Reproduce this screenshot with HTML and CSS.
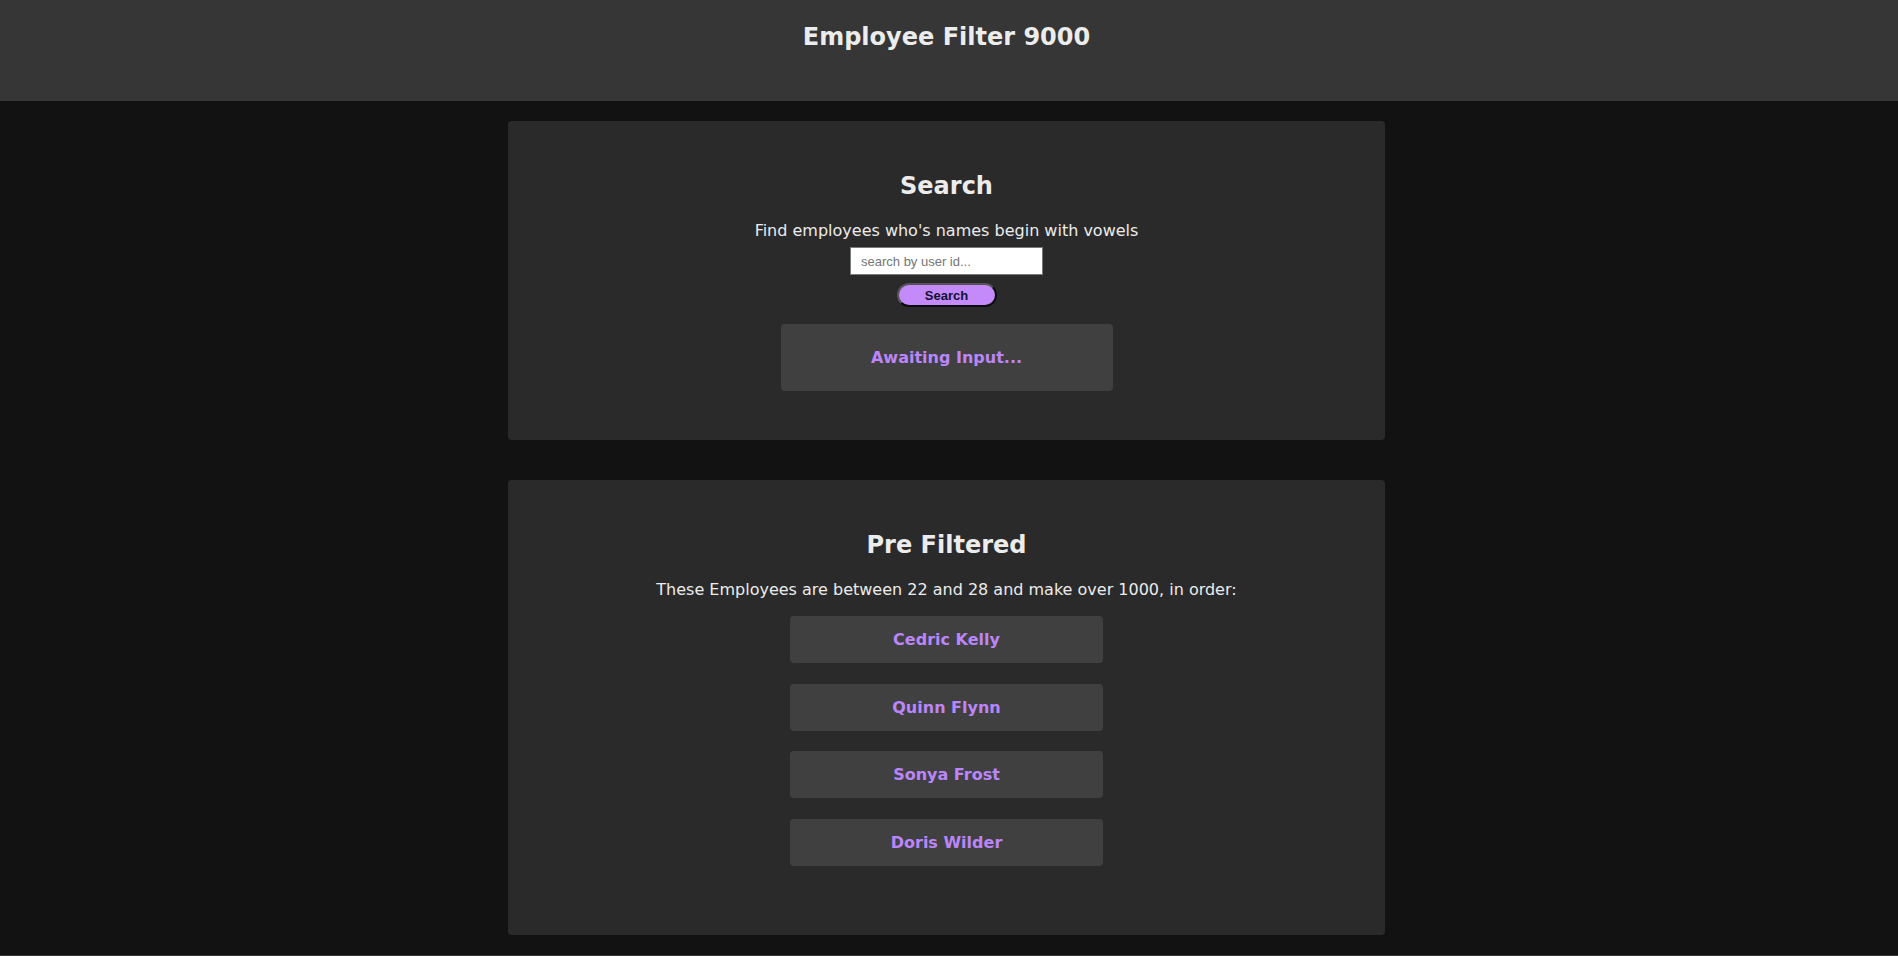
FILE: index.html
```html
<!DOCTYPE html>
<html lang="en">
<head>
<meta charset="utf-8">
<title>Employee Filter 9000</title>
<link rel="stylesheet" href="styles.css">
</head>
<body>
<header class="site-header">
  <h1 class="site-title">Employee Filter 9000</h1>
</header>
<main class="main">
  <section class="card">
    <h2 class="card-title">Search</h2>
    <p class="card-text">Find employees who's names begin with vowels</p>
    <input class="search-input" type="text" placeholder="search by user id...">
    <button class="search-button" type="button">Search</button>
    <div class="status-box">Awaiting Input...</div>
  </section>
  <section class="card">
    <h2 class="card-title">Pre Filtered</h2>
    <p class="card-text">These Employees are between 22 and 28 and make over 1000, in order:</p>
    <ul class="employee-list">
      <li class="employee">Cedric Kelly</li>
      <li class="employee">Quinn Flynn</li>
      <li class="employee">Sonya Frost</li>
      <li class="employee">Doris Wilder</li>
    </ul>
  </section>
</main>
<footer class="site-footer"></footer>
</body>
</html>
```
FILE: styles.css
```css
* { box-sizing: border-box; }
html, body {
  margin: 0;
  padding: 0;
  background: #121212;
  color: #ececec;
  font-family: "DejaVu Sans", Verdana, sans-serif;
}
.site-header {
  background: #363636;
  height: 101px;
  padding: 23px 5px 0 0;
  display: flex;
  justify-content: center;
}
.site-title {
  margin: 0;
  font-size: 24px;
  line-height: 28px;
  font-weight: bold;
  color: #ececec;
}
.main {
  display: flex;
  flex-direction: column;
  align-items: center;
  padding: 20px 5px 20px 0;
  gap: 40px;
}
.card {
  width: 877px;
  background: #2a2a2a;
  border-radius: 4px;
  padding: 51px 0 49px;
  display: flex;
  flex-direction: column;
  align-items: center;
}
.card-title {
  margin: 0;
  font-size: 24px;
  line-height: 28px;
  font-weight: bold;
  color: #ececec;
}
.card-text {
  margin: 21px 0 0;
  font-size: 16px;
  line-height: 19px;
  color: #ececec;
}
.search-input {
  margin-top: 7px;
  width: 193px;
  height: 28px;
  border: 1px solid #7a7a7a;
  background: #fff;
  padding: 0 10px;
  font-family: "Liberation Sans", Arial, sans-serif;
  font-size: 13px;
  color: #222;
}
.search-input::placeholder { color: #757575; }
.search-button {
  margin-top: 8px;
  width: 100px;
  height: 24px;
  border-radius: 12px;
  background: #c58af9;
  border: 2px solid;
  border-color: #555 #0c0c0c #0c0c0c #555;
  font-family: "Liberation Sans", Arial, sans-serif;
  font-weight: bold;
  font-size: 13px;
  color: #111133;
  padding: 0;
  cursor: pointer;
}
.status-box {
  margin-top: 17px;
  width: 332px;
  height: 67px;
  background: #404040;
  border-radius: 4px;
  display: flex;
  align-items: center;
  justify-content: center;
  font-weight: bold;
  font-size: 16px;
  color: #bb86fc;
}
.employee-list {
  list-style: none;
  margin: 17px 0 0;
  padding: 0 0 20px;
  display: flex;
  flex-direction: column;
  gap: 20.5px;
}
.employee {
  width: 313px;
  height: 47px;
  background: #404040;
  border-radius: 4px;
  display: flex;
  align-items: center;
  justify-content: center;
  font-weight: bold;
  font-size: 16px;
  color: #bb86fc;
}
.site-footer {
  background: #363636;
  height: 40px;
}
```
